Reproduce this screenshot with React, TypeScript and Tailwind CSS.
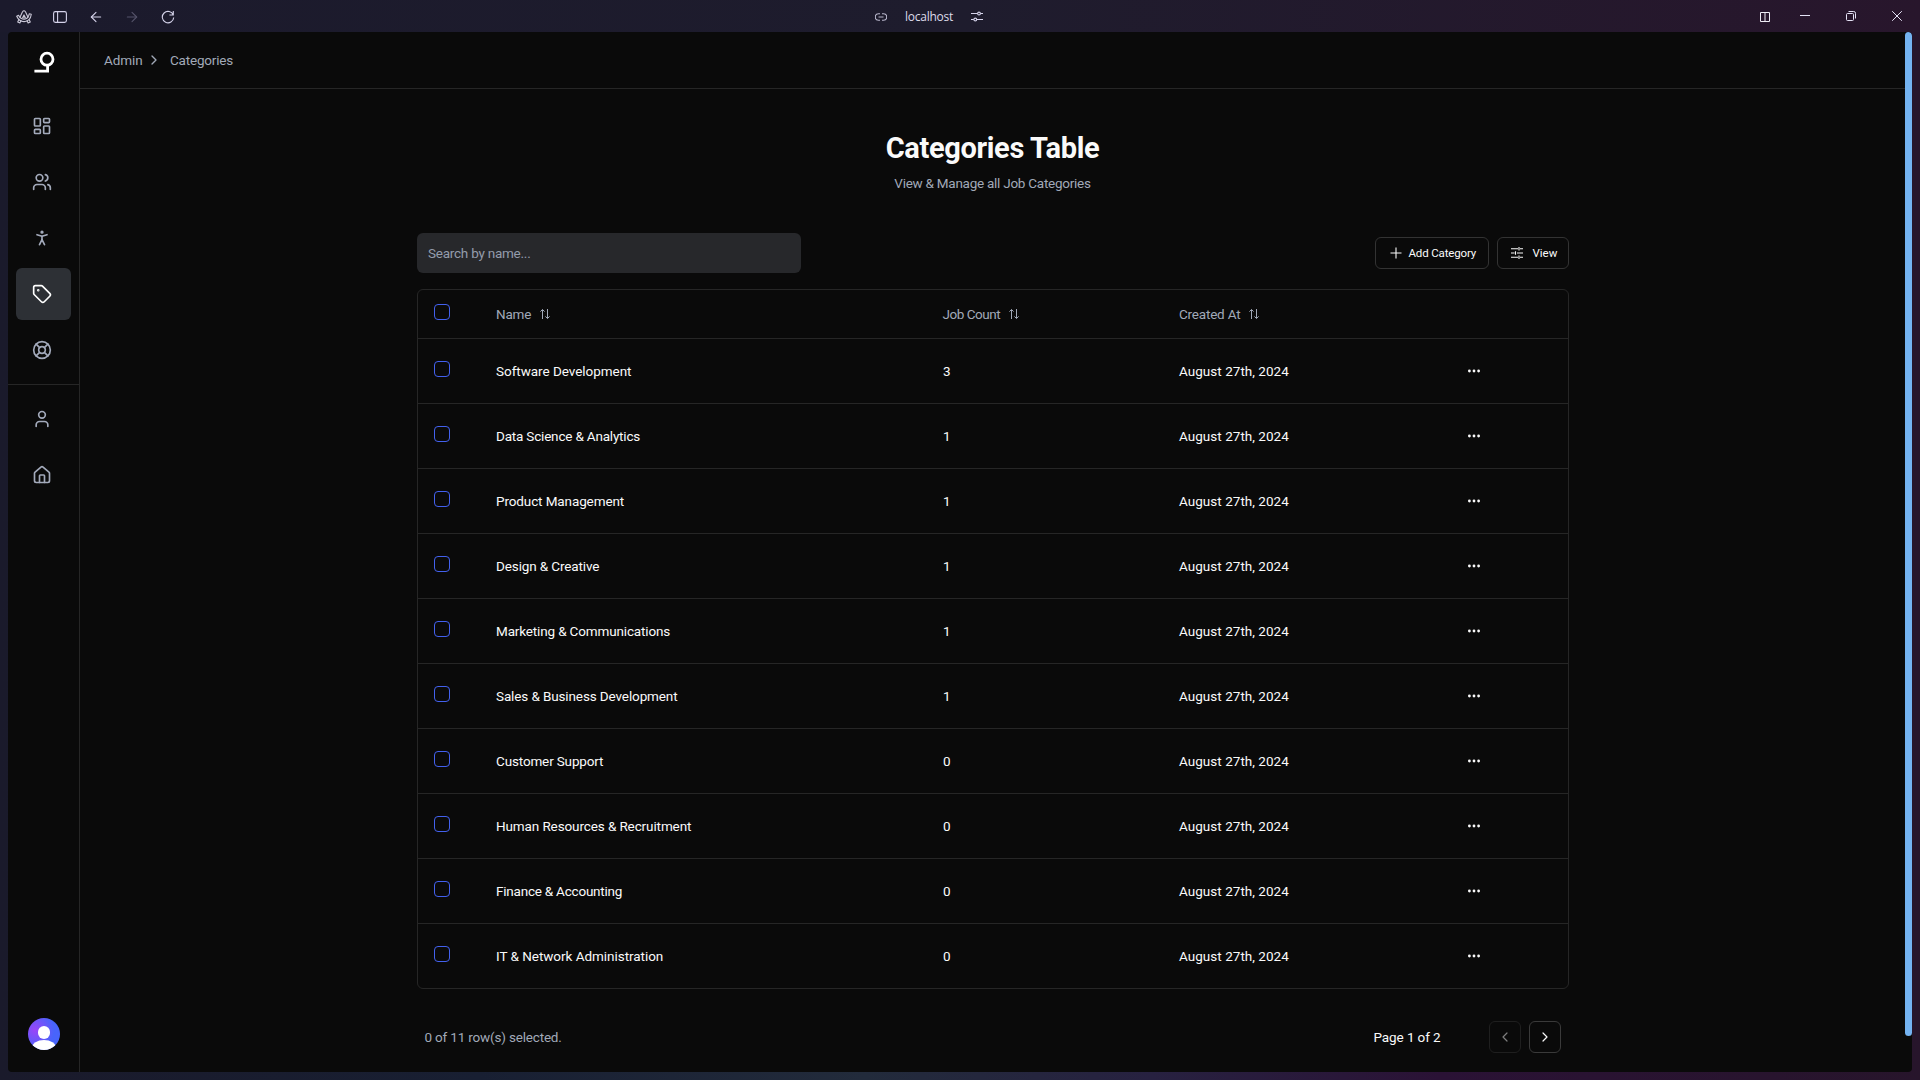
import type { ReactNode } from "react";
import {
  LayoutDashboard, Users, PersonStanding, Tag, LifeBuoy, User, House, ChevronRight, ChevronLeft,
  ArrowLeft, ArrowRight,
} from "lucide-react";

const rows = [
  { name: "Software Development", count: 3, track: "tracking-[-0.04px]" },
  { name: "Data Science & Analytics", count: 1, track: "tracking-[-0.19px]" },
  { name: "Product Management", count: 1, track: "tracking-[-0.11px]" },
  { name: "Design & Creative", count: 1, track: "tracking-[-0.12px]" },
  { name: "Marketing & Communications", count: 1, track: "tracking-[-0.15px]" },
  { name: "Sales & Business Development", count: 1, track: "tracking-[-0.12px]" },
  { name: "Customer Support", count: 0, track: "tracking-[-0.15px]" },
  { name: "Human Resources & Recruitment", count: 0, track: "tracking-[-0.11px]" },
  { name: "Finance & Accounting", count: 0, track: "tracking-[-0.22px]" },
  { name: "IT & Network Administration", count: 0, track: "tracking-[-0.04px]" },
];

function NavItem({ children, active = false }: { children: ReactNode; active?: boolean }) {
  return (
    <a className={active
      ? "flex h-[52px] w-[55px] items-center rounded-md bg-[#2d3035] pl-4 text-white"
      : "flex h-[52px] w-[55px] items-center rounded-md pl-4 text-[#a3aabb]"}>
      {children}
    </a>
  );
}

function Checkbox() {
  return <span className="-mt-1 ml-4 block size-4 rounded-[4px] border border-[#4361ee]" />;
}

function SortIcon() {
  return (
    <svg viewBox="0 0 12 12" className="ml-2 size-3" fill="none" stroke="currentColor" strokeWidth="1">
      <path d="M3.5 11V1.6M1.4 3.6l2.1-2.1 2.1 2.1M8.500 1v9.400M6.400 8.400l2.100 2.100 2.100-2.100" />
    </svg>
  );
}

function Dots() {
  return (
    <svg viewBox="0 0 14 4" className="ml-[25px] h-1 w-3.5" fill="currentColor">
      <circle cx="2.4" cy="2" r="1.4" /><circle cx="7" cy="2" r="1.4" /><circle cx="11.6" cy="2" r="1.4" />
    </svg>
  );
}

const grid = "grid grid-cols-[62px_447px_236px_279px_1fr] items-center";

function TitleBar() {
  return (
    <header className="flex h-8 shrink-0 items-center text-[#d5d3ea]">
      <div className="flex w-[881px] items-center pl-4 pt-0.5">
        <svg viewBox="0 0 16 14" className="h-3.5 w-4" fill="none" stroke="#c9c7d6" strokeWidth="1.1" strokeLinejoin="round" strokeLinecap="round">
          <path d="M5 10.600 3.900 12.900 1.700 11.900 3 9.200M4.100 7 6.400 2Q8 -.4 9.600 2L12 7.200M13.200 9.700 14.300 11.900 12.100 12.900 11 10.500" />
          <path d="M6.600 7.800 8 4.900l1.400 2.900q-1.400.5-2.800 0z" />
          <path d="M.7 6.300 2.500 5.300Q4.600 9.300 8.200 9.300 12.300 9.100 13.300 3.700l2 .5Q14.300 11.500 8 11.600 3 11.500.7 6.300z" />
        </svg>
        <svg viewBox="0 0 14 12" className="ml-[21px] h-3 w-3.5" fill="none" stroke="currentColor" strokeWidth="1.1">
          <rect x=".6" y=".6" width="12.8" height="10.8" rx="1.8" /><path d="M4.6 1v10" />
        </svg>
        <ArrowLeft className="ml-[21px] size-4" strokeWidth={1.6} />
        <ArrowRight className="ml-5 size-4 text-[#55536a]" strokeWidth={1.6} />
        <svg viewBox="0 0 14 14" className="ml-[21px] size-3.5" fill="none" stroke="currentColor" strokeWidth="1.1">
          <path d="M12.3 5A5.7 5.7 0 1 0 12.7 7.5M12.3 1v4H8.4" />
        </svg>
      </div>
      <div className="flex items-center pt-0.5">
        <svg viewBox="0 0 12 8" className="ml-[-6px] h-2 w-3" fill="none" stroke="#b9b7cc" strokeWidth="1.1">
          <path d="M5 .8H3.5a3.1 3.1 0 0 0 0 6.4H5M7 .8h1.5a3.1 3.1 0 0 1 0 6.4H7M3.5 4h5" />
        </svg>
        <span className="ml-[18px] w-[48px] whitespace-nowrap font-['Open_Sans'] text-[12px] leading-none tracking-[-0.25px] text-[#dddbea]">localhost</span>
        <svg viewBox="0 0 12 12" className="ml-[18px] size-3" fill="none" stroke="currentColor" strokeWidth="1.1">
          <path d="M0 2.500h6.500M9.500 2.500H12M0 8.500h2.800M5.800 8.500H12" /><circle cx="8" cy="2.500" r="1.4" /><circle cx="4.300" cy="8.500" r="1.4" />
        </svg>
      </div>
      <div className="ml-auto flex items-center">
        <svg viewBox="0 0 10 10" className="mt-0.5 size-2.5" fill="none" stroke="#eeedf5" strokeWidth="1">
          <path d="M.5.5h9v9h-9zM5 1v8" />
        </svg>
        <span className="ml-[30px] mt-[-1px] h-px w-2.5 bg-[#e4e2f5]" />
        <svg viewBox="0 0 10 10" className="ml-9 size-2.5" fill="none" stroke="#e4e2f5" strokeWidth="1">
          <rect x=".5" y="2.5" width="7" height="7" rx="1" /><path d="M2.5.5h5.2q1.8 0 1.8 1.8V7.5" />
        </svg>
        <svg viewBox="0 0 10 10" className="ml-9 mr-[18px] size-2.5" fill="none" stroke="#e4e2f5" strokeWidth="1">
          <path d="m.2.2 9.6 9.6M9.8.2.2 9.8" />
        </svg>
      </div>
    </header>
  );
}

function Sidebar() {
  return (
    <aside className="flex w-[72px] shrink-0 flex-col border-r border-[#262626]">
      <svg viewBox="0 0 22 22" className="ml-[26px] mt-[19px] size-[22px]" fill="none" stroke="#fff" strokeWidth="2.8">
        <circle cx="13" cy="8.2" r="6" /><path d="M.4 20.2h13.2v-6" />
      </svg>
      <nav className="mt-[27px] flex flex-col gap-1 pl-2">
        <NavItem><LayoutDashboard size={20} /></NavItem>
        <NavItem><Users size={20} /></NavItem>
        <NavItem><PersonStanding size={20} /></NavItem>
        <NavItem active><Tag size={20} /></NavItem>
        <NavItem><LifeBuoy size={20} /></NavItem>
      </nav>
      <div className="mt-2 h-px bg-[#262626]" />
      <nav className="mt-2 flex flex-col gap-1 pl-2">
        <NavItem><User size={20} /></NavItem>
        <NavItem><House size={20} /></NavItem>
      </nav>
      <div className="mb-[22px] ml-5 mt-auto flex size-8 flex-col items-center overflow-hidden rounded-full bg-[radial-gradient(circle_at_22%_38%,#9a45f8,#4864fb_60%)]">
        <span className="mt-2 h-[13px] w-3 shrink-0 rounded-full bg-white" />
        <span className="mt-px h-4 w-6 shrink-0 rounded-[50%] bg-white" />
      </div>
    </aside>
  );
}

export default function App() {
  return (
    <div className="flex h-[1080px] w-[1920px] flex-col overflow-hidden bg-[linear-gradient(90deg,#1b1a2c,#1e1c2d_50%,#28162c)] font-['Roboto',sans-serif] text-[13.5px] leading-5 text-[#fafafa]">
      <TitleBar />
      <div className="flex-1 bg-[linear-gradient(90deg,#1a1a2b,#181f32_25%,#222b3b_45%,#272140_60%,#2a1235_75%,#27152b)] px-2 pb-2">
        <div className="flex h-[1040px] overflow-hidden rounded bg-[#0a0a0a]">
          <Sidebar />
          <main className="flex flex-1 flex-col">
            <div className="flex h-[57px] shrink-0 items-center border-b border-[#262626] pl-6 text-[#a1a9b8]">
              <span className="w-[38px] tracking-[-0.1px]">Admin</span>
              <ChevronRight className="ml-1 size-4" />
              <span className="ml-2 tracking-[-0.2px]">Categories</span>
            </div>
            <div className="mx-auto flex w-[1152px] flex-col">
              <h1 className="mt-[41px] text-center text-[29px] font-bold leading-9 tracking-[-0.35px]">Categories Table</h1>
              <p className="mt-[7px] text-center tracking-[-0.26px] text-[#a1a9b8]">View &amp; Manage all Job Categories</p>
              <div className="mt-10 flex items-center">
                <div className="flex h-10 w-96 items-center rounded-md bg-[#27282b] pl-[11.500px] tracking-[-0.24px] text-[#949cab]">Search by name...</div>
                <button className="ml-auto flex h-8 w-[114px] items-center whitespace-nowrap rounded-md border border-[#333333] pl-3.5 text-[11.5px] font-[450]">
                  <svg viewBox="0 0 12 12" className="size-3" stroke="currentColor" strokeWidth="1.1"><path d="M6 .5v11M.5 6h11" /></svg>
                  <span className="ml-[7px] tracking-[-0.15px]">Add Category</span>
                </button>
                <button className="ml-2 flex h-8 w-[72px] items-center rounded-md border border-[#333333] pl-[13px] text-[11.5px] font-[450]">
                  <svg viewBox="0 0 12 12" className="size-3" stroke="currentColor" strokeWidth="1.1">
                    <path d="M0 1.8h7M9 1.8h3M8 0v3.6M0 6h3.5M6 6h6M4.5 4.2v3.6M0 10.2h7M9 10.2h3M8 8.4V12" />
                  </svg>
                  <span className="ml-2.5">View</span>
                </button>
              </div>
              <div className="mt-4 rounded-md border border-[#262626]">
                <div className={grid + " h-[49px] border-b border-[#262626] text-[#a1a9b8]"}>
                  <Checkbox />
                  <span className="flex items-center pl-[16.5px] tracking-[-0.2px]">Name<SortIcon /></span>
                  <span className="flex items-center pl-4 tracking-[-0.45px]">Job Count<SortIcon /></span>
                  <span className="flex items-center pl-[16.5px] tracking-[-0.2px]">Created At<SortIcon /></span>
                </div>
                {rows.map((r) => (
                  <div key={r.name} className={grid + " h-[65px] border-b border-[#262626] font-[450] last:h-16 last:border-b-0"}>
                    <Checkbox />
                    <span className={"pl-[16.5px] " + r.track}>{r.name}</span>
                    <span className="pl-[16.5px]">{r.count}</span>
                    <span className="pl-[16.5px] tracking-[0.03px]">August 27th, 2024</span>
                    <Dots />
                  </div>
                ))}
              </div>
              <div className="mt-8 flex h-8 items-center pl-2 pr-2">
                <span className="tracking-[-0.18px] text-[#a1a9b8]">0 of 11 row(s) selected.</span>
                <span className="ml-auto mr-12 w-[67px] whitespace-nowrap font-[450] tracking-[-0.1px]">Page 1 of 2</span>
                <button className="flex h-8 w-8 items-center justify-center rounded-md border border-[#1f1f1f] text-[#7e7e7e]"><ChevronLeft className="size-4" strokeWidth={1.8} /></button>
                <button className="ml-2 flex h-8 w-8 items-center justify-center rounded-md border border-[#3a3a3a]"><ChevronRight className="size-4" strokeWidth={1.8} /></button>
              </div>
            </div>
          </main>
          <div className="w-[7px]"><div className="h-[1004px] rounded-full bg-[#74b3f1]" /></div>
        </div>
      </div>
    </div>
  );
}
